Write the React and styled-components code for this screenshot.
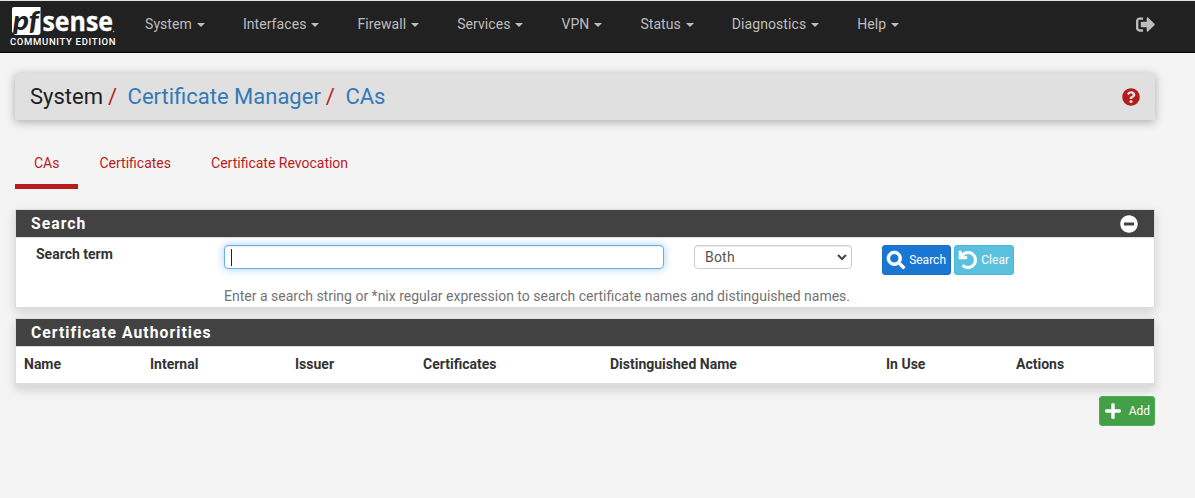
import React from 'react';
import styled, { createGlobalStyle } from 'styled-components';
import { FaSearch, FaUndo, FaPlus, FaSignOutAlt, FaQuestionCircle, FaMinusCircle } from 'react-icons/fa';

const GlobalStyle = createGlobalStyle`
  * { box-sizing: border-box; }
  body {
    margin: 0;
    background: #f4f4f4;
    color: #333;
    font: 14px/20px Roboto, "Liberation Sans", sans-serif;
  }
  svg { display: block; overflow: visible; }
`;

const Navbar = styled.nav`
  display: flex;
  height: 53px;
  border-top: 1px solid #dfe3e5;
  border-bottom: 1px solid #000;
  background: #212121;
`;

const Brand = styled.a`
  width: 126px;
  padding: 5px 0 0 9px;
`;

const Menu = styled.ul`
  display: flex;
  flex: 1;
  margin: 0;
  padding: 0;
  list-style: none;
`;

const MenuItem = styled.li`
  display: flex;
  align-items: center;
  height: 46px;
  padding: 0 19px;
  color: #bdbdbd;
  letter-spacing: 0.07px;

  &::after {
    content: '';
    margin: 2px 0 0 5px;
    border: 4px solid transparent;
    border-top-color: currentColor;
    border-bottom: 0;
  }
`;

const Logout = styled.a`
  padding: 14px 40px 0 0;
  color: #bdbdbd;
  font-size: 19px;
`;

const Page = styled.main`
  padding: 20px 40px 0 15px;
`;

const PageHeader = styled.header`
  display: flex;
  align-items: center;
  justify-content: space-between;
  height: 47px;
  padding: 0 15px;
  border-radius: 2px;
  background: #e0e0e0;
  box-shadow: 0 2px 10px rgba(0, 0, 0, 0.3);
`;

const Breadcrumb = styled.ol`
  display: flex;
  margin: 0;
  padding: 0;
  list-style: none;
  font-size: 22px;
  line-height: 24px;
  color: #337ab7;
`;

const Crumb = styled.li`
  color: ${(p) => (p.$plain ? '#212121' : 'inherit')};

  &:not(:first-child)::before {
    content: '/';
    padding: 0 10.5px 0 5px;
    color: #c41c1c;
  }
`;

const HelpIcon = styled(FaQuestionCircle)`
  color: #b71c1c;
  font-size: 18px;
`;

const Tabs = styled.ul`
  display: flex;
  margin: 20px 0;
  padding: 0;
  list-style: none;
`;

const Tab = styled.li`
  height: 49px;
  padding: 13px 19px 0;
  border-bottom: 5px solid ${(p) => (p.$active ? '#b71c1c' : 'transparent')};
  margin-right: 2px;
  color: #b71c1c;
`;

const Panel = styled.section`
  margin-bottom: 10px;
  border: 1px solid #ddd;
  border-bottom-width: ${(p) => p.$foot || 1}px;
  background: #fff;
  box-shadow: 0 4px 10px rgba(0, 0, 0, 0.14);
`;

const PanelHeading = styled.h2`
  display: flex;
  align-items: center;
  justify-content: space-between;
  height: 28px;
  margin: 0;
  padding: 0 16px 0 15px;
  border-bottom: 1px solid #ddd;
  background: #424242;
  color: #fff;
  font-size: 15.7px;
  font-weight: 700;
  letter-spacing: 1.05px;
  line-height: 28px;

  svg { font-size: 18px; margin-top: 1px; }
`;

const SearchForm = styled.div`
  display: grid;
  grid-template-columns: 158px 440px 158px 1fr;
  column-gap: 30px;
  height: 69px;
  padding: 7px 20px 0;
`;

const Label = styled.label`
  font-weight: 700;
  line-height: 19px;
`;

const Field = styled.div`
  display: flex;
  align-items: center;
  height: 24px;
  border: 1px solid #66afe9;
  border-radius: 4px;
  padding-left: 6px;
  background: #fff;
  box-shadow: inset 0 1px 1px rgba(0, 0, 0, 0.075), 0 0 8px rgba(102, 175, 233, 0.6);
`;

const Caret = styled.span`
  width: 1px;
  height: 17px;
  background: #222;
`;

const Select = styled.div`
  display: flex;
  align-items: center;
  justify-content: space-between;
  height: 24px;
  padding: 0 4px 0 10px;
  border: 1px solid #ccc;
  border-radius: 4px;
  color: #555;
  letter-spacing: 0.2px;
  box-shadow: inset 0 1px 1px rgba(0, 0, 0, 0.075);
`;

const HelpText = styled.p`
  grid-column: 2 / -1;
  margin: 15px 0 0;
  color: #737373;
  white-space: nowrap;
`;

const Actions = styled.div`
  display: flex;
  gap: 3px;
  height: 24px;
`;

const tones = {
  primary: ['#1976d2', '#1c6bbd'],
  info: ['#5bc0de', '#46b8da'],
  success: ['#43a047', '#4caf50'],
};

const Button = styled.button`
  display: flex;
  align-items: center;
  justify-content: space-between;
  width: ${(p) => p.$width}px;
  height: 30px;
  padding: 0 4px;
  border: 1px solid ${(p) => tones[p.$tone][1]};
  border-radius: 3px;
  background: ${(p) => tones[p.$tone][0]};
  color: #fff;
  font: 12px/18px Roboto, "Liberation Sans", sans-serif;

  svg {
    font-size: 18px;
    stroke: currentColor;
    stroke-width: ${(p) => (p.$bold ? 18 : 0)}px;
  }
`;

const Columns = styled.div`
  display: grid;
  grid-template-columns: 126px 145px 128px 187px 276px 130px 1fr;
  height: 36px;
  padding-left: 8px;
  font-weight: 700;
  line-height: 35px;
`;

const Footer = styled.div`
  display: flex;
  justify-content: flex-end;
`;

const Logo = () => (
  <svg width="110" height="42" viewBox="0 0 110 42">
    <path d="M5 1H31.500V26Q31.500 29 28.500 29H6L3 26V3Q3 1 5 1Z" fill="#fff" />
    <text x="4" y="24" fontFamily="Lato, sans-serif" fontWeight="900" fontSize="26" fontStyle="italic" fill="#212121" textLength="25.500" lengthAdjust="spacingAndGlyphs">pf</text>
    <text x="33.500" y="24.500" fontFamily="Open Sans, sans-serif" fontWeight="700" fontSize="27" fill="#fff" stroke="#fff" strokeWidth="0.300" textLength="70.500" lengthAdjust="spacingAndGlyphs">sense</text>
    <circle cx="104.500" cy="25.500" r="0.8" fill="#aaa" />
    <text x="1" y="39" fontFamily="Roboto, sans-serif" fontWeight="500" fontSize="9.500" fill="#fff" textLength="105.500" lengthAdjust="spacing">COMMUNITY EDITION</text>
  </svg>
);

const menu = ['System', 'Interfaces', 'Firewall', 'Services', 'VPN', 'Status', 'Diagnostics', 'Help'];
const columns = ['Name', 'Internal', 'Issuer', 'Certificates', 'Distinguished Name', 'In Use', 'Actions'];

export default function App() {
  return (
    <>
      <GlobalStyle />
      <Navbar>
        <Brand><Logo /></Brand>
        <Menu>{menu.map((m) => <MenuItem key={m}>{m}</MenuItem>)}</Menu>
        <Logout><FaSignOutAlt /></Logout>
      </Navbar>
      <Page>
        <PageHeader>
          <Breadcrumb>
            <Crumb $plain>System</Crumb>
            <Crumb>Certificate Manager</Crumb>
            <Crumb>CAs</Crumb>
          </Breadcrumb>
          <HelpIcon />
        </PageHeader>
        <Tabs>
          <Tab $active>CAs</Tab>
          <Tab>Certificates</Tab>
          <Tab>Certificate Revocation</Tab>
        </Tabs>
        <Panel>
          <PanelHeading>Search<FaMinusCircle /></PanelHeading>
          <SearchForm>
            <Label>Search term</Label>
            <Field><Caret /></Field>
            <Select>
              Both
              <svg width="10" height="7" viewBox="0 0 10 7" fill="none" stroke="#444" strokeWidth="2">
                <path d="M1 1l4 4 4-4" />
              </svg>
            </Select>
            <Actions>
              <Button $tone="primary" $width={69} $bold><FaSearch />Search</Button>
              <Button $tone="info" $width={60} $bold><FaUndo />Clear</Button>
            </Actions>
            <HelpText>Enter a search string or *nix regular expression to search certificate names and distinguished names.</HelpText>
          </SearchForm>
        </Panel>
        <Panel $foot={3}>
          <PanelHeading>Certificate Authorities</PanelHeading>
          <Columns>{columns.map((c) => <span key={c}>{c}</span>)}</Columns>
        </Panel>
        <Footer>
          <Button $tone="success" $width={56}><FaPlus />Add</Button>
        </Footer>
      </Page>
    </>
  );
}
